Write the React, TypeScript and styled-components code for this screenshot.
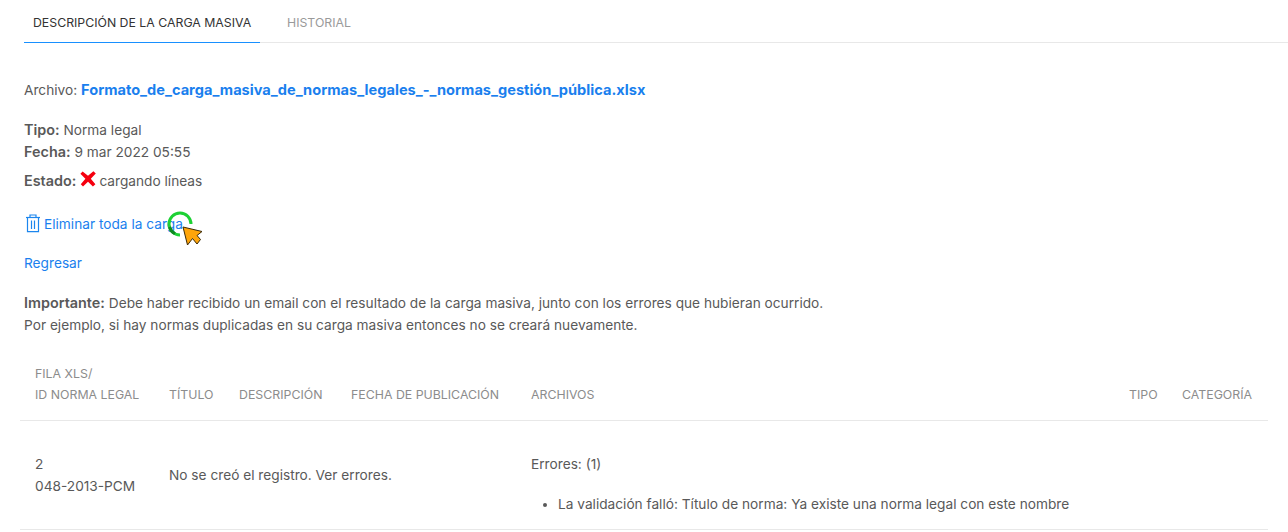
import React from 'react';
import styled, { createGlobalStyle } from 'styled-components';

const GlobalStyle = createGlobalStyle`
  html, body { margin: 0; padding: 0; background: #fff; }
  body { font-family: Inter, "Liberation Sans", sans-serif; font-size: 13.7px; color: #595959; overflow: hidden; }
`;

const App: React.FC = () => (
  <Page>
    <GlobalStyle />
    <Tabs>
      <Tab $active>DESCRIPCIÓN DE LA CARGA MASIVA</Tab>
      <Tab>HISTORIAL</Tab>
    </Tabs>

    <FileLine>
      Archivo: <FileLink href="#">Formato_de_carga_masiva_de_normas_legales_-_normas_gestión_pública.xlsx</FileLink>
    </FileLine>

    <Meta><b>Tipo:</b> Norma legal</Meta>
    <Meta><b>Fecha:</b> 9 mar 2022 05:55</Meta>
    <StateLine>
      <b>Estado:</b>
      <CrossIcon width="16" height="16" viewBox="0 0 16 16">
        <path d="M2.6 0.6 L8 4.8 L13.4 0.2 L15.8 2.4 L10.8 7.8 L15.4 13.2 L12.9 15.4 L8 10.8 L3 15.6 L0.8 13.3 L5.4 7.8 L0.4 2.8 Z" fill="#f5000f" />
      </CrossIcon>
      cargando líneas
    </StateLine>

    <DeleteRow>
      <TrashIcon width="16" height="20" viewBox="0 0 16 20" fill="none" stroke="#1c86ee" strokeWidth="1.2">
        <path d="M1 4.5 H15" />
        <path d="M5 4.5 V2 H11 V4.5" />
        <path d="M2.5 4.5 V18.6 H13.5 V4.5" />
        <path d="M6.5 7.5 V16" />
        <path d="M9.5 7.5 V16" />
      </TrashIcon>
      <PlainLink href="#">Eliminar toda la carga</PlainLink>
      <BusyCursor width="40" height="40" viewBox="0 0 40 40">
        <path d="M15 27 A11 11 0 1 1 26 16" fill="none" stroke="#1dd134" strokeWidth="3" />
        <path d="M10 25.8 A11 11 0 0 1 4.6 19" fill="none" stroke="#0f8a22" strokeWidth="3" />
        <path d="M18 19 L37 23.5 L32 27.5 L35.5 31.5 L32 36 L27.5 30.5 L22.5 37 Z" fill="#ffa50a" stroke="#3a2a08" strokeWidth="1" strokeLinejoin="round" />
      </BusyCursor>
    </DeleteRow>

    <BackRow><PlainLink href="#">Regresar</PlainLink></BackRow>

    <Notice>
      <b>Importante:</b> Debe haber recibido un email con el resultado de la carga masiva, junto con los errores que hubieran ocurrido.
      <br />
      Por ejemplo, si hay normas duplicadas en su carga masiva entonces no se creará nuevamente.
    </Notice>

    <Table>
      <colgroup>
        <col width="134" />
        <col width="70" />
        <col width="112" />
        <col width="180" />
        <col width="598" />
        <col width="53" />
        <col width="101" />
      </colgroup>
      <thead>
        <tr>
          <Th>FILA XLS/<br />ID NORMA LEGAL</Th>
          <Th>TÍTULO</Th>
          <Th>DESCRIPCIÓN</Th>
          <Th>FECHA DE PUBLICACIÓN</Th>
          <Th>ARCHIVOS</Th>
          <Th>TIPO</Th>
          <Th>CATEGORÍA</Th>
        </tr>
      </thead>
      <tbody>
        <tr>
          <Td>2<br />048-2013-PCM</Td>
          <Td colSpan={3}>No se creó el registro. Ver errores.</Td>
          <ListTd colSpan={3}>
            Errores: (1)
            <ErrorList>
              <li>La validación falló: Título de norma: Ya existe una norma legal con este nombre</li>
            </ErrorList>
          </ListTd>
        </tr>
      </tbody>
    </Table>
  </Page>
);

const Page = styled.div`
  padding: 0 20px 0 24px;
  height: 532px;
  box-sizing: border-box;
  overflow: hidden;
  line-height: 22px;
  b { font-weight: 600; font-size: 14.4px; }
`;

const Tabs = styled.div`
  display: flex;
  height: 43px;
  margin-right: -20px;
  box-sizing: border-box;
  border-bottom: 1px solid #e8e8e8;
`;

const Tab = styled.div<{ $active?: boolean }>`
  box-sizing: border-box;
  height: 43px;
  padding: 12px 9px 0;
  font-size: 12.3px;
  white-space: nowrap;
  width: ${p => (p.$active ? '236px' : 'auto')};
  padding-left: ${p => (p.$active ? '9px' : '27px')};
  color: ${p => (p.$active ? '#333' : '#9a9a9a')};
  border-bottom: ${p => (p.$active ? '1px solid #1890ff' : 'none')};
`;

const FileLine = styled.p`
  margin: 36px 0 0;
`;

const FileLink = styled.a`
  color: #1a7fee;
  font-size: 14.6px;
  font-weight: 700;
  text-decoration: none;
`;

const Meta = styled.div`
  ${FileLine} + & { margin-top: 18px; }
`;

const StateLine = styled.div`
  display: flex;
  align-items: center;
  gap: 3px;
  height: 22px;
  margin-top: 7px;
`;

const CrossIcon = styled.svg`
  margin: -4px 0 0 1px;
`;

const DeleteRow = styled.div`
  position: relative;
  display: flex;
  align-items: center;
  gap: 3px;
  margin-top: 21px;
  height: 22px;
`;

const TrashIcon = styled.svg`
  margin: -2px 0 0 1px;
`;

const BusyCursor = styled.svg`
  position: absolute;
  left: 141px;
  top: -5px;
`;

const PlainLink = styled.a`
  color: #1a7fee;
  text-decoration: none;
`;

const BackRow = styled.div`
  margin-top: 17px;
`;

const Notice = styled.p`
  margin: 18px 0 0;
`;

const Table = styled.table`
  width: 1248px;
  margin: 13px 0 0 -4px;
  border-collapse: collapse;
  table-layout: fixed;
`;

const Th = styled.th`
  padding: 14px 0 15px 15px;
  text-align: left;
  vertical-align: bottom;
  font-size: 12.35px;
  font-weight: 400;
  line-height: 21px;
  color: #8c8c8c;
  border-bottom: 1px solid #e8e8e8;
  white-space: nowrap;
`;

const Td = styled.td`
  height: 108px;
  padding: 0 0 0 15px;
  vertical-align: middle;
  border-bottom: 1px solid #e8e8e8;
`;

const ListTd = styled(Td)`
  padding: 32px 0 14px 15px;
  vertical-align: top;
  box-sizing: border-box;
`;

const ErrorList = styled.ul`
  margin: 18px 0 0;
  padding-left: 27px;
`;

export default App;
